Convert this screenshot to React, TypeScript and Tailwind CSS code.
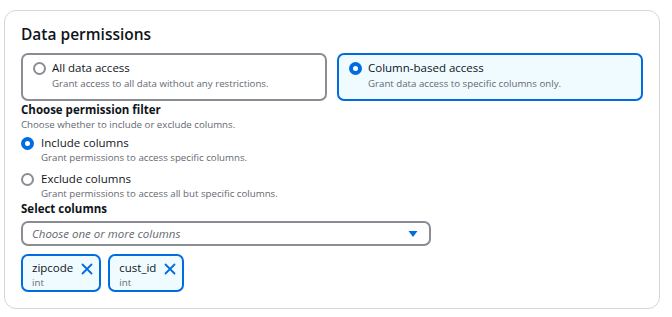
import * as React from "react";

const font = { fontFamily: '"Open Sans", "Noto Sans", sans-serif' };

function Radio({ checked }: { checked: boolean }) {
  return checked ? (
    <span className="mt-[2px] flex h-[13px] w-[13px] shrink-0 items-center justify-center rounded-full bg-[#006ce0]">
      <span className="h-[5px] w-[5px] rounded-full bg-white" />
    </span>
  ) : (
    <span className="mt-[2px] h-[13px] w-[13px] shrink-0 rounded-full border-2 border-[#8c8c94] bg-white" />
  );
}

function Tile({ label, desc, selected }: { label: string; desc: string; selected: boolean }) {
  return (
    <div
      className={
        "flex h-[48px] flex-1 gap-[6px] rounded-[7px] border-2 px-[10px] pt-[5px] " +
        (selected ? "border-[#006ce0] bg-[#f0fbff]" : "border-[#8c8c94] bg-white")
      }
    >
      <Radio checked={selected} />
      <div>
        <div className="text-[11.5px] leading-[16px] text-[#0f141a]">{label}</div>
        <div className="text-[9.7px] leading-[15px] text-[#656871]">{desc}</div>
      </div>
    </div>
  );
}

function Option({ label, desc, checked }: { label: string; desc: string; checked: boolean }) {
  return (
    <div className="flex gap-[7px]">
      <Radio checked={checked} />
      <div>
        <div className="text-[11.5px] leading-[16px] text-[#0f141a]">{label}</div>
        <div className="text-[9.7px] leading-[14px] text-[#656871]">{desc}</div>
      </div>
    </div>
  );
}

function Token({ name, type }: { name: string; type: string }) {
  return (
    <div className="flex h-[38px] gap-[8px] rounded-[7px] border-2 border-[#006ce0] bg-[#f0fbff] pl-[9px] pr-[6px] pt-[4px]">
      <div>
        <div className="text-[11.5px] leading-[16px] text-[#0f141a]">{name}</div>
        <div className="text-[9.7px] leading-[14px] text-[#656871]">{type}</div>
      </div>
      <svg width="12" height="12" viewBox="0 0 12 12" className="mt-[3px]">
        <path d="M1.5 1.5 L10.5 10.5 M10.5 1.5 L1.5 10.5" stroke="#006ce0" strokeWidth="1.8" strokeLinecap="round" fill="none" />
      </svg>
    </div>
  );
}

export default function App() {
  return (
    <div className="h-[317px] w-[672px] bg-white pl-[4px] pt-[10px]" style={font}>
      <div className="h-[299px] w-[656px] rounded-[12px] border border-[#d5d6da] pl-[16px] pr-[16px] pt-[12px]">
        <h2 className="text-[15.5px] font-semibold leading-[22px] text-[#0f141a]">Data permissions</h2>

        <div className="mt-[8px] flex gap-[10px]">
          <Tile label="All data access" desc="Grant access to all data without any restrictions." selected={false} />
          <Tile label="Column-based access" desc="Grant data access to specific columns only." selected={true} />
        </div>

        <div className="mt-[1px] text-[11.5px] font-bold leading-[16px] text-[#0f141a]">Choose permission filter</div>
        <div className="text-[9.7px] leading-[14px] text-[#656871]">Choose whether to include or exclude columns.</div>

        <div className="mt-[3px] flex flex-col gap-[6px]">
          <Option label="Include columns" desc="Grant permissions to access specific columns." checked={true} />
          <Option label="Exclude columns" desc="Grant permissions to access all but specific columns." checked={false} />
        </div>

        <div className="text-[11.5px] font-bold leading-[16px] text-[#0f141a]">Select columns</div>
        <div className="mt-[4px] flex h-[25px] w-[410px] items-center justify-between rounded-[7px] border-2 border-[#8c8c94] pl-[9px] pr-[11px]">
          <span className="text-[11.5px] italic text-[#656871]">Choose one or more columns</span>
          <svg width="10" height="8" viewBox="0 0 10 8">
            <path d="M0.5 1 H9.5 L5 7 Z" fill="#006ce0" />
          </svg>
        </div>

        <div className="mt-[8px] flex gap-[7px]">
          <Token name="zipcode" type="int" />
          <Token name="cust_id" type="int" />
        </div>
      </div>
    </div>
  );
}
